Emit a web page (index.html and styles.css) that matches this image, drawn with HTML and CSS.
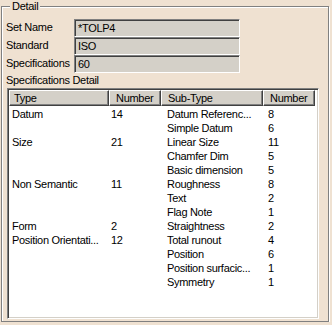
FILE: index.html
```html
<!DOCTYPE html>
<html lang="en">
<head>
    <meta charset="UTF-8">
    <title>Detail</title>
    <link rel="stylesheet" href="styles.css">
</head>
<body>
    <div class="group">
        <span class="legend">Detail</span>

        <div class="fields">
            <label>Set Name</label>
            <div class="field">*TOLP4</div>
            <label>Standard</label>
            <div class="field">ISO</div>
            <label>Specifications</label>
            <div class="field">60</div>
        </div>

        <div class="caption">Specifications Detail</div>

        <div class="list">
            <table>
                <colgroup>
                    <col class="c-type">
                    <col class="c-num">
                    <col class="c-sub">
                    <col class="c-num">
                </colgroup>
                <thead>
                    <tr>
                        <th class="first">Type</th>
                        <th>Number</th>
                        <th>Sub-Type</th>
                        <th>Number</th>
                    </tr>
                </thead>
                <tbody>
                    <tr><td class="t">Datum</td><td class="n">14</td><td class="s">Datum Referenc...</td><td class="m">8</td></tr>
                    <tr><td class="t"></td><td class="n"></td><td class="s">Simple Datum</td><td class="m">6</td></tr>
                    <tr><td class="t">Size</td><td class="n">21</td><td class="s">Linear Size</td><td class="m">11</td></tr>
                    <tr><td class="t"></td><td class="n"></td><td class="s">Chamfer Dim</td><td class="m">5</td></tr>
                    <tr><td class="t"></td><td class="n"></td><td class="s">Basic dimension</td><td class="m">5</td></tr>
                    <tr><td class="t">Non Semantic</td><td class="n">11</td><td class="s">Roughness</td><td class="m">8</td></tr>
                    <tr><td class="t"></td><td class="n"></td><td class="s">Text</td><td class="m">2</td></tr>
                    <tr><td class="t"></td><td class="n"></td><td class="s">Flag Note</td><td class="m">1</td></tr>
                    <tr><td class="t">Form</td><td class="n">2</td><td class="s">Straightness</td><td class="m">2</td></tr>
                    <tr><td class="t">Position Orientati...</td><td class="n">12</td><td class="s">Total runout</td><td class="m">4</td></tr>
                    <tr><td class="t"></td><td class="n"></td><td class="s">Position</td><td class="m">6</td></tr>
                    <tr><td class="t"></td><td class="n"></td><td class="s">Position surfacic...</td><td class="m">1</td></tr>
                    <tr><td class="t"></td><td class="n"></td><td class="s">Symmetry</td><td class="m">1</td></tr>
                </tbody>
            </table>
        </div>
    </div>
</body>
</html>
```

FILE: styles.css
```css
* {
    box-sizing: border-box;
}

body {
    margin: 0;
    background: #efe1d1;
    font-family: "Liberation Sans", Arial, sans-serif;
    font-size: 11px;
    letter-spacing: -0.3px;
    color: #000;
}

/* etched group box */
.group {
    position: relative;
    margin: 6px 0 0 1px;
    width: 328px;
    height: 316px;
    border: 1px solid #808080;
    box-shadow: 1px 1px 0 #fff, inset 1px 1px 0 #fff;
    padding: 12px 0 0 4px;
}

.legend {
    position: absolute;
    top: -7px;
    left: 8px;
    padding: 0 2px;
    line-height: 13px;
    background: #efe1d1;
}

.fields {
    display: grid;
    grid-template-columns: 68px 166px;
    grid-auto-rows: 18px;
}

.fields label {
    line-height: 16px;
}

.field {
    border: 1px solid;
    border-color: #808080 #fff #fff #808080;
    box-shadow: inset 1px 1px 0 #404040;
    background: #d4d0c8;
    padding: 1px 3px 0;
    line-height: 15px;
}

.caption {
    margin-top: 1px;
    height: 14px;
    line-height: 13px;
}

/* sunken list view */
.list {
    margin-left: 1px;
    width: 312px;
    height: 231px;
    border: 1px solid;
    border-color: #808080 #fff #fff #808080;
    box-shadow: inset 1px 1px 0 #404040, inset -1px -1px 0 #d4d0c8;
    background: #fff;
    padding: 1px;
    overflow: hidden;
}

table {
    table-layout: fixed;
    border-collapse: separate;
    border-spacing: 0;
    width: 306px;
}

.c-type { width: 100px; }
.c-num { width: 52px; }
.c-sub { width: 102px; }

th {
    background: #d4d0c8;
    border-top: 1px solid #fff;
    border-left: 1px solid #fff;
    border-right: 1px solid #404040;
    border-bottom: 1px solid #404040;
    box-shadow: inset -1px -1px 0 #808080;
    font-weight: normal;
    text-align: left;
    line-height: 14px;
    padding: 0 0 0 6px;
    white-space: nowrap;
}

th.first {
    padding-left: 4px;
}

td {
    line-height: 14px;
    height: 14px;
    padding: 0;
    white-space: nowrap;
    overflow: hidden;
}

tbody tr:first-child td {
    padding-top: 1px;
}

td.t { padding-left: 3px; }
td.n { padding-left: 2px; }
td.s { padding-left: 6px; }
td.m { padding-left: 5px; }
```
